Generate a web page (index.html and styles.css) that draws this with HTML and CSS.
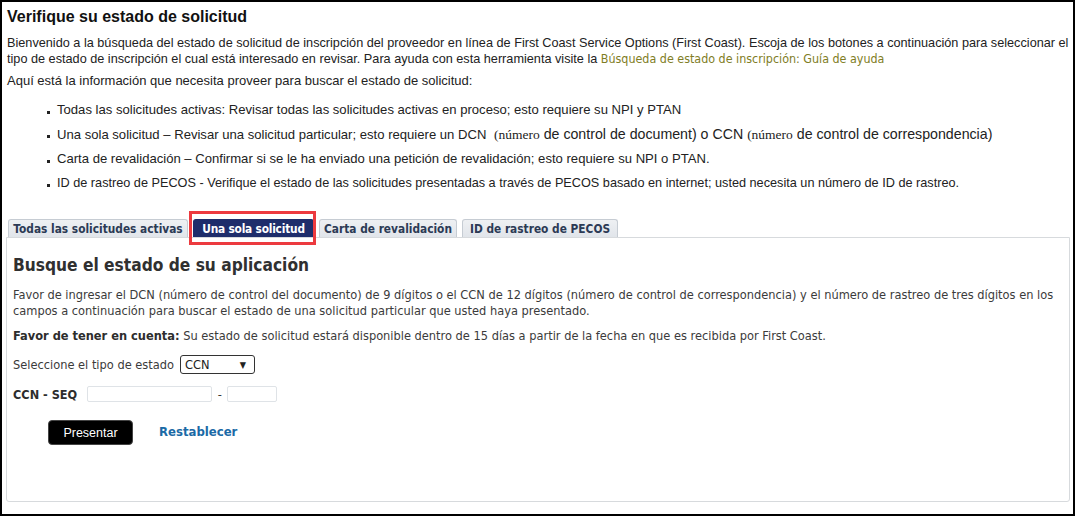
FILE: index.html
```html
<!DOCTYPE html>
<html lang="es">
<head>
<meta charset="utf-8">
<title>Verifique su estado de solicitud</title>
<link rel="stylesheet" href="styles.css">
</head>
<body>
<div class="frame">
  <div class="intro">
    <h1 class="title">Verifique su estado de solicitud</h1>
    <p class="lead">Bienvenido a la búsqueda del estado de solicitud de inscripción del proveedor en línea de First Coast Service Options (First Coast). Escoja de los botones a continuación para seleccionar el tipo de estado de inscripción el cual está interesado en revisar. Para ayuda con esta herramienta visite la <a class="help-link" href="#">Búsqueda de estado de inscripción: Guía de ayuda</a></p>
    <p class="lead2">Aquí está la información que necesita proveer para buscar el estado de solicitud:</p>
    <ul class="info-list">
      <li>Todas las solicitudes activas: Revisar todas las solicitudes activas en proceso; esto requiere su NPI y PTAN</li>
      <li class="big">Una sola solicitud – Revisar una solicitud particular; esto requiere un DCN <span class="big-part">&nbsp;<span class="serif">(número</span> de control de document) o CCN <span class="serif">(número</span> de control de correspondencia)</span></li>
      <li>Carta de revalidación – Confirmar si se le ha enviado una petición de revalidación; esto requiere su NPI o PTAN.</li>
      <li class="narrow">ID de rastreo de PECOS - Verifique el estado de las solicitudes presentadas a través de PECOS basado en internet; usted necesita un número de ID de rastreo.</li>
    </ul>
  </div>

  <div class="tabs">
    <div class="tab tab-1">Todas las solicitudes activas</div>
    <div class="tab tab-2 tab-active">Una sola solicitud</div>
    <div class="tab tab-3">Carta de revalidación</div>
    <div class="tab tab-4">ID de rastreo de PECOS</div>
  </div>
  <div class="panel">
    <h2 class="panel-title">Busque el estado de su aplicación</h2>
    <p class="panel-text">Favor de ingresar el DCN (número de control del documento) de 9 dígitos o el CCN de 12 dígitos (número de control de correspondencia) y el número de rastreo de tres dígitos en los campos a continuación para buscar el estado de una solicitud particular que usted haya presentado.</p>
    <p class="panel-note"><b>Favor de tener en cuenta:</b> Su estado de solicitud estará disponible dentro de 15 días a partir de la fecha en que es recibida por First Coast.</p>
    <div class="row-select">
      <span>Seleccione el tipo de estado</span>
      <div class="select"><span>CCN</span><span class="arrow">▼</span></div>
    </div>
    <div class="row-inputs">
      <span class="ccn-label">CCN - SEQ</span>
      <span class="input input-long"></span>
      <span class="dash">-</span>
      <span class="input input-short"></span>
    </div>
    <div class="row-buttons">
      <button class="btn-submit" type="button">Presentar</button>
      <a class="reset" href="#">Restablecer</a>
    </div>
  </div>
</div>
</body>
</html>
```

FILE: styles.css
```css
html, body {
  margin: 0;
  padding: 0;
  background: #fff;
}

.frame {
  width: 1075px;
  height: 516px;
  box-sizing: border-box;
  border: 2px solid #000;
  padding: 0 3px 0 4px;
  font-family: "Liberation Sans", Arial, sans-serif;
  color: #222;
  overflow: hidden;
}

.intro {
  padding-left: 1px;
}

.title {
  margin: 5px 0 0 0;
  font-size: 16px;
  line-height: 20px;
  font-weight: bold;
  color: #111;
}

.lead {
  margin: 8px 0 0 0;
  font-size: 12.7px;
  line-height: 16px;
  color: #222;
}

.help-link {
  color: #807d25;
  text-decoration: none;
  font-family: "DejaVu Sans Condensed", "DejaVu Sans", sans-serif;
  font-size: 12.4px;
}

.lead2 {
  margin: 6px 0 0 0;
  font-size: 13px;
  line-height: 16px;
}

.info-list {
  margin: 13px 0 0 0;
  padding-left: 50px;
  font-size: 13.1px;
  line-height: 16px;
  list-style: none;
}

.info-list li {
  position: relative;
  margin-bottom: 8px;
}

.info-list li.narrow {
  font-size: 12.7px;
}

.info-list li::before {
  content: "";
  position: absolute;
  left: -10px;
  top: 9px;
  width: 3px;
  height: 3px;
  background: #222;
}

.info-list li.big {
  margin-top: -1px;
  margin-bottom: 7px;
  line-height: 18px;
}

.info-list li.big::before {
  top: 10px;
}

.big-part {
  font-size: 14.2px;
}

.serif {
  font-family: "Liberation Serif", "Times New Roman", serif;
  font-size: 13.5px;
}

.tabs {
  display: flex;
  gap: 5px;
  padding-left: 2px;
  margin-top: 27px;
  height: 19px;
  align-items: flex-end;
}

.tab {
  position: relative;
  height: 18px;
  box-sizing: border-box;
  padding: 0;
  border: 1px solid #c6ccd3;
  border-bottom: none;
  border-radius: 3px 3px 0 0;
  background: linear-gradient(#eef0f3, #e1e5ea);
  font-family: "DejaVu Sans Condensed", "DejaVu Sans", sans-serif;
  font-weight: bold;
  font-size: 11.8px;
  line-height: 18px;
  color: #2c3a55;
  white-space: nowrap;
  text-align: center;
}

.tab-1 { width: 180px; }
.tab-2 { width: 121px; }
.tab-3 { width: 138px; }
.tab-4 { width: 156px; }

.tab-active {
  background: #1e2d6b;
  border-color: #1e2d6b;
  color: #fff;
  letter-spacing: -0.2px;
}

.tab-active::after {
  content: "";
  position: absolute;
  left: -5px;
  right: -3px;
  top: -9px;
  bottom: -8px;
  border: 3px solid #ec3a3f;
}

.panel {
  height: 265px;
  box-sizing: border-box;
  border: 1px solid #d7dadd;
  border-radius: 0 0 3px 3px;
  padding: 15px 6px 0 6px;
  font-family: "DejaVu Sans Condensed", "DejaVu Sans", sans-serif;
  font-size: 12.7px;
  color: #3b3b3b;
}

.panel-title {
  margin: 0;
  font-size: 17.2px;
  line-height: 24px;
  font-weight: bold;
  color: #303030;
}

.panel-text {
  margin: 10px 0 0 0;
  line-height: 16px;
}

.panel-note {
  margin: 9px 0 0 0;
  line-height: 16px;
}

.panel-note b {
  color: #2d2d2d;
}

.row-select {
  display: flex;
  align-items: center;
  gap: 6px;
  margin-top: 11px;
}

.select {
  width: 75px;
  height: 19px;
  box-sizing: border-box;
  border: 1px solid #333;
  border-radius: 3px;
  display: flex;
  align-items: center;
  justify-content: space-between;
  padding: 0 8px 0 4px;
  color: #222;
}

.arrow {
  font-size: 9px;
  color: #222;
}

.row-inputs {
  display: flex;
  align-items: center;
  margin-top: 12px;
}

.ccn-label {
  font-weight: bold;
  font-size: 12.6px;
  color: #2d2d2d;
  margin-right: 10px;
}

.input {
  display: block;
  height: 16px;
  box-sizing: border-box;
  border: 1px solid #dfe3e7;
  border-radius: 2px;
  background: #fff;
}

.input-long {
  width: 125px;
}

.input-short {
  width: 50px;
}

.dash {
  width: 15px;
  text-align: center;
}

.row-buttons {
  display: flex;
  align-items: center;
  gap: 26px;
  margin-top: 18px;
  padding-left: 35px;
}

.btn-submit {
  width: 85px;
  height: 25px;
  background: #000;
  color: #fff;
  border: 1px solid #444;
  border-radius: 4px;
  font-family: "Liberation Sans", Arial, sans-serif;
  font-size: 12.5px;
  padding: 0;
}

.reset {
  color: #1b6aa6;
  font-weight: bold;
  font-size: 13px;
  text-decoration: none;
  margin-top: -2px;
}
```
